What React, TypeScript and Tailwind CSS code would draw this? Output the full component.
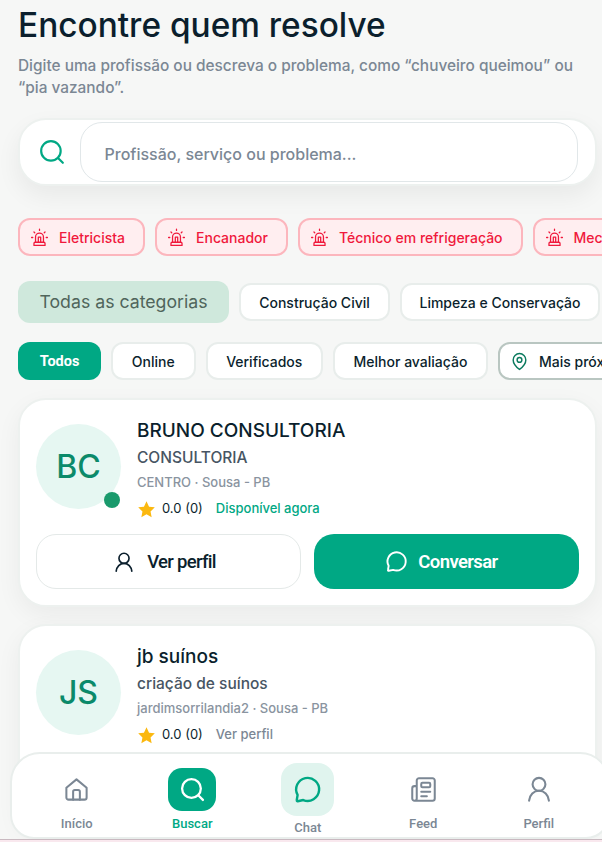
import React from "react";

const inter = { fontFamily: "Inter, sans-serif" };
const roboto = { fontFamily: "Roboto, sans-serif" };

function Siren({ className = "" }: { className?: string }) {
  return (
    <svg viewBox="0 0 24 24" fill="none" stroke="currentColor" strokeWidth="1.6" strokeLinecap="round" strokeLinejoin="round" className={className}>
      <path d="M7 18v-6.500a5 5 0 0 1 10 0V18" />
      <path d="M5 22v-2.500A1.500 1.500 0 0 1 6.500 18h11a1.500 1.500 0 0 1 1.500 1.500V22z" />
      <path d="M12 3V1.500M20.500 12H22M2 12h1.500M18 6l1-1M5 5l1 1" />
      <path d="M10.500 18v-6.500h3V18" />
    </svg>
  );
}

function SearchIcon({ className = "", sw = 2 }: { className?: string; sw?: number }) {
  return (
    <svg viewBox="0 0 24 24" fill="none" stroke="currentColor" strokeWidth={sw} strokeLinecap="round" strokeLinejoin="round" className={className}>
      <circle cx="11" cy="11" r="9" />
      <path d="m18 18 4 4" />
    </svg>
  );
}

function Bubble({ className = "", sw = 2 }: { className?: string; sw?: number }) {
  return (
    <svg viewBox="0 0 24 24" fill="none" stroke="currentColor" strokeWidth={sw} strokeLinecap="round" strokeLinejoin="round" className={className}>
      <path d="M3.800 16.500A9.500 9.500 0 1 1 8.500 20.700L3.900 21.700a.7.7 0 0 1-.8-.9z" />
    </svg>
  );
}

function User({ className = "", sw = 2 }: { className?: string; sw?: number }) {
  return (
    <svg viewBox="0 0 24 24" fill="none" stroke="currentColor" strokeWidth={sw} strokeLinecap="round" strokeLinejoin="round" className={className}>
      <circle cx="12" cy="8" r="5.500" />
      <path d="M3.500 22c.5-5 4-8.500 8.500-8.500s8 3.500 8.500 8.500" />
    </svg>
  );
}

function Star() {
  return (
    <svg viewBox="0 0 24 24" className="w-[19px] h-[19px] shrink-0" fill="#fbb80f">
      <path d="M12 1.500l3.200 6.900 7.300.9-5.400 5.100 1.400 7.400-6.500-3.700-6.500 3.700 1.400-7.400L1.500 9.300l7.300-.9z" />
    </svg>
  );
}

function Red({ label }: { label: string }) {
  return (
    <div className="h-[38px] shrink-0 flex items-center gap-[10px] pl-[10px] pr-[18px] rounded-[12px] border-2 border-[#fcb6bd] bg-[#ffeef0] text-[#f0193c] text-[14px] font-medium">
      <Siren className="w-[19px] h-[19px]" />
      <span>{label}</span>
    </div>
  );
}

function Chip({ children, cls = "" }: { children: React.ReactNode; cls?: string }) {
  return (
    <div className={`shrink-0 flex items-center justify-center whitespace-nowrap rounded-[12px] border-2 border-[#e8edeb] bg-white text-[#0b1f2d] text-[14px] font-medium ${cls}`}>
      {children}
    </div>
  );
}

function NavItem({ icon, label, cls = "text-[#7b8794]" }: { icon: React.ReactNode; label: string; cls?: string }) {
  return (
    <div className={`w-[115.500px] flex flex-col items-center ${cls}`}>
      <div className="h-[50px] mt-[2px] flex items-center justify-center">{icon}</div>
      <span className="text-[13px] font-medium" style={roboto}>{label}</span>
    </div>
  );
}

function Card({ initials, name, cat, loc, tag, tagCls, online, actions }: { initials: string; name: string; cat: string; loc: string; tag: string; tagCls: string; online?: boolean; actions?: boolean }) {
  return (
    <div className="ml-[18px] w-[579px] shrink-0 rounded-[28px] border-2 border-[#edf1ef] bg-white shadow-[0_8px_24px_rgba(0,0,0,0.05)] pl-[16px] pr-[16px] pt-[18px] pb-[16px]">
      <div className="flex gap-[16px] items-start">
        <div className="relative w-[85px] h-[85px] mt-[6px] rounded-full bg-[#e6f7f2] flex items-center justify-center pt-[1px] text-[#0b8a6a] text-[32px] font-medium shrink-0">
          {initials}
          {online && <span className="absolute right-[1px] bottom-[1px] w-[16px] h-[16px] rounded-full bg-[#1a9a6c]" />}
        </div>
        <div className="flex flex-col mt-[1px]">
          <div className="text-[19px] leading-[24px] font-medium text-[#0b1f2d]">{name}</div>
          <div className="text-[15.500px] leading-[22px] mt-[4px] font-medium text-[#475563]">{cat}</div>
          <div className="text-[13px] leading-[18px] mt-[4px] font-medium text-[#8a94a0]">{loc}</div>
          <div className="flex items-center mt-[6px] h-[24px] text-[13px] text-[#0b1f2d]">
            <Star />
            <span className="ml-[6px]">0.0 (0)</span>
            <span className={`ml-[13px] font-medium ${tagCls}`}>{tag}</span>
          </div>
        </div>
      </div>
      {actions && (
        <div className="flex gap-[13px] mt-[13px]">
          <div className="w-[265px] h-[55px] rounded-[20px] border-[1.500px] border-[#e4e9e8] bg-white flex items-center justify-center gap-[12px] pr-[8px] text-[#0b1f2d] text-[18.500px] tracking-[-0.7px] font-medium" style={roboto}>
            <User className="w-[22px] h-[22px]" sw={1.800} />
            <span className="pt-[3px]">Ver perfil</span>
          </div>
          <div className="w-[265px] h-[55px] rounded-[20px] bg-[#00a884] flex items-center justify-center gap-[10px] pr-[10px] text-white text-[18.500px] tracking-[-0.6px] font-semibold" style={roboto}>
            <Bubble className="w-[23px] h-[23px]" />
            <span className="pt-[3px]">Conversar</span>
          </div>
        </div>
      )}
    </div>
  );
}

export default function App() {
  return (
    <div className="relative w-[602px] h-[842px] overflow-hidden bg-[#f6f7f6]" style={inter}>
      <div className="flex flex-col">
        <h1 className="ml-[18px] mt-[3px] text-[33.400px] leading-[44px] font-medium text-[#0b1f2d]">Encontre quem resolve</h1>
        <p className="mx-[18px] mt-[8px] text-[15.400px] leading-[22px] font-medium text-[#7b8794]">Digite uma profissão ou descreva o problema, como “chuveiro queimou” ou “pia vazando”.</p>
        <div className="ml-[18px] mt-[19px] w-[579px] h-[68px] rounded-[28px] border-2 border-[#edf1ef] bg-white shadow-[0_10px_24px_rgba(0,0,0,0.06)] flex items-center pl-[19px] pr-[17px] gap-[15px]">
          <SearchIcon className="w-[26px] h-[26px] text-[#00a884] shrink-0" />
          <div className="flex-1 h-[60px] rounded-[22px] border-[1.500px] border-[#e1e7e9] flex items-center pl-[23.500px] pt-[4px] text-[16px] font-medium text-[#7b8794]">Profissão, serviço ou problema...</div>
        </div>
        <div className="flex gap-[10px] pl-[18px] mt-[32px]">
          <Red label="Eletricista" />
          <Red label="Encanador" />
          <Red label="Técnico em refrigeração" />
          <Red label="Mecânico" />
        </div>
        <div className="flex gap-[10px] pl-[18px] mt-[25px] items-center">
          <div className="w-[211px] h-[42px] shrink-0 rounded-[12px] bg-[#cfe8dc] flex items-center justify-center text-[#50655b] text-[17.700px]">Todas as categorias</div>
          <Chip cls="w-[151px] h-[38px]">Construção Civil</Chip>
          <Chip cls="w-[200px] h-[38px]">Limpeza e Conservação</Chip>
        </div>
        <div className="flex gap-[10px] pl-[18px] mt-[19px] items-center">
          <div className="w-[83px] h-[38px] shrink-0 rounded-[12px] bg-[#00a884] flex items-center justify-center pt-[1px] text-white text-[14.500px] font-bold" style={roboto}>Todos</div>
          <Chip cls="w-[84.500px] h-[38px]">Online</Chip>
          <Chip cls="w-[117.500px] h-[38px]">Verificados</Chip>
          <Chip cls="w-[155px] h-[38px]">Melhor avaliação</Chip>
          <div className="shrink-0 h-[38px] w-[140px] rounded-[12px] border-2 border-[#b9c6c1] bg-white flex items-center pl-[10px] gap-[10px] whitespace-nowrap text-[#0b1f2d] text-[14px] font-medium">
            <svg viewBox="0 0 24 24" fill="none" stroke="#0b7a5e" strokeWidth="1.800" className="w-[19px] h-[19px] shrink-0"><path d="M20 10c0 6-8 12-8 12s-8-6-8-12a8 8 0 0 1 16 0z" /><circle cx="12" cy="10" r="3" /></svg>
            Mais próximos
          </div>
        </div>
        <div className="flex flex-col gap-[17px] mt-[18px]">
          <Card initials="BC" name="BRUNO CONSULTORIA" cat="CONSULTORIA" loc="CENTRO · Sousa - PB" tag="Disponível agora" tagCls="text-[#00a884]" online actions />
          <Card initials="JS" name="jb suínos" cat="criação de suínos" loc="jardimsorrilandia2 · Sousa - PB" tag="Ver perfil" tagCls="text-[#7b8794]" actions />
        </div>
      </div>
      <div className="absolute left-[10px] top-[752px] w-[600px] h-[87px] rounded-t-[30px] rounded-b-[24px] border-2 border-[#e9eeec] bg-white flex pl-[7px] pt-[8px]">
        <NavItem label="Início" icon={
          <svg viewBox="0 0 24 24" fill="none" stroke="currentColor" strokeWidth="1.800" strokeLinecap="round" strokeLinejoin="round" className="w-[27px] h-[27px]"><path d="M3 10.500 12 3l9 7.500V19a2 2 0 0 1-2 2H5a2 2 0 0 1-2-2z" /><path d="M9 21v-7a1.500 1.500 0 0 1 1.500-1.500h3A1.500 1.500 0 0 1 15 14v7" /></svg>
        } />
        <NavItem label="Buscar" cls="text-[#00a884] font-bold" icon={
          <div className="w-[48px] h-[43px] rounded-[14px] bg-[#00a884] flex items-center justify-center text-white"><SearchIcon className="w-[25px] h-[25px]" sw={2.200} /></div>
        } />
        <div className="w-[115.500px] flex flex-col items-center text-[#7b8794]">
          <div className="w-[53px] h-[53px] mt-[1px] rounded-[16px] bg-[#e0f4ee] flex items-center justify-center text-[#00a884]"><Bubble className="w-[29px] h-[29px]" /></div>
          <span className="text-[13px] font-medium mt-[2px]" style={roboto}>Chat</span>
        </div>
        <NavItem label="Feed" icon={
          <svg viewBox="0 0 24 24" fill="none" stroke="currentColor" strokeWidth="1.800" strokeLinecap="round" strokeLinejoin="round" className="w-[27px] h-[27px]"><path d="M4 22h16a2 2 0 0 0 2-2V4a2 2 0 0 0-2-2H8a2 2 0 0 0-2 2v16a2 2 0 0 1-4 0V11a2 2 0 0 1 2-2h2" /><path d="M18 14h-8M15 18h-5" /><rect x="10" y="6" width="8" height="4" rx="1" /></svg>
        } />
        <NavItem label="Perfil" icon={<User className="w-[28px] h-[28px]" sw={1.800} />} />
      </div>
      <div className="absolute left-0 right-0 bottom-0 h-[3px] bg-[#f9e8ee] border-t border-[#c9b9c0]" />
    </div>
  );
}
